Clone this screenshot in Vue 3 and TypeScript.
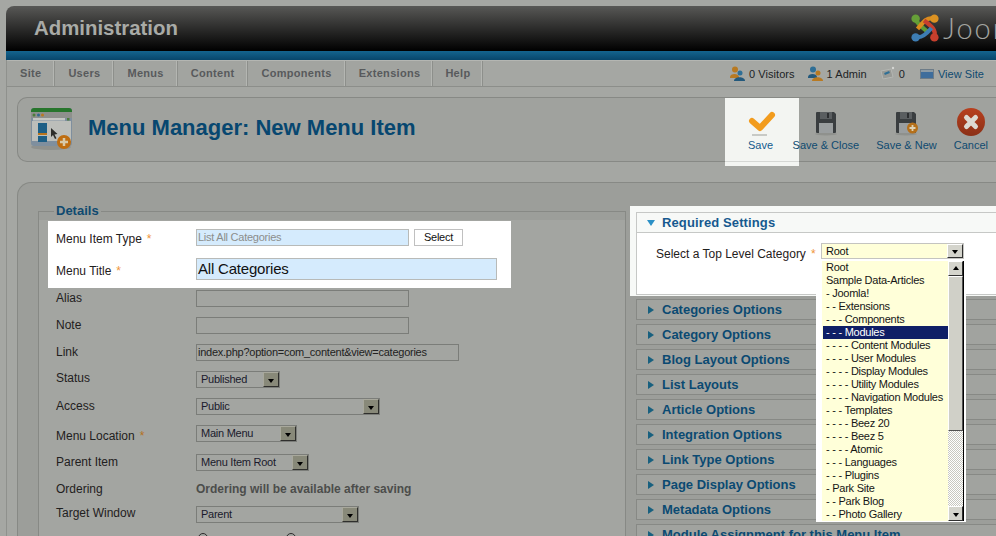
<template>
  <div class="page">
    <header class="topbar">
      <h1 class="topbar__title">Administration</h1>
      <div class="logo">
        <svg width="30" height="30" viewBox="0 0 32 32" fill="none" stroke-width="4.500">
          <path d="M6 7C9 13 13 15 20 21" stroke="#5f9c34" />
          <path d="M25 6C18 4 14 10 8 17" stroke="#d98c1e" />
          <path d="M26 25C28 18 23 14 15 8" stroke="#c63f2d" />
          <path d="M6 25C11 28 17 23 23 16" stroke="#3d7db4" />
          <circle cx="6" cy="6" r="4.500" fill="#669f38" />
          <circle cx="26" cy="6" r="4.500" fill="#dc9222" />
          <circle cx="6" cy="26" r="4.500" fill="#3d7db4" />
          <circle cx="26" cy="26" r="4.500" fill="#c63f2d" />
        </svg>
        <span class="logo__text">Joomla</span>
      </div>
    </header>
    <div class="blueband"></div>

    <div class="body">
      <nav class="submenu">
        <ul class="submenu__tabs">
          <li v-for="item in menu" :key="item">{{ item }}</li>
        </ul>
        <div class="status">
          <span class="status__item">
            <svg width="15" height="15" viewBox="0 0 15 15"><circle cx="5" cy="3.500" r="3" fill="#b87a22" /><path d="M0 11c0-4 9-4 9 0v1H0z" fill="#b87a22" /><circle cx="10" cy="7" r="2.500" fill="#2f6f96" /><path d="M4 15c0-5 11-5 11 0z" fill="#23597c" /></svg>
            0 Visitors
          </span>
          <span class="status__item">
            <svg width="15" height="15" viewBox="0 0 15 15"><circle cx="5" cy="3.500" r="3" fill="#2f6f96" /><path d="M0 11c0-4 9-4 9 0v1H0z" fill="#23597c" /><circle cx="10" cy="7" r="2.500" fill="#b87a22" /><path d="M4 15c0-5 11-5 11 0z" fill="#b87a22" /></svg>
            1 Admin
          </span>
          <span class="status__item">
            <svg width="15" height="15" viewBox="0 0 15 15"><path d="M1 5l10-2 2 8-10 2z" fill="#989a96" stroke="#b4b6b2" /><path d="M4.500 8l5-2" stroke="#2f6f96" stroke-width="2" /><circle cx="13" cy="2" r="1.200" fill="#d4d6d2" /></svg>
            0
          </span>
          <span class="status__item status__item--link">
            <svg width="14" height="12" viewBox="0 0 14 12"><rect x="0.500" y="1.500" width="13" height="9" fill="#3e6d9c" stroke="#6d7c88" /><rect x="1" y="2" width="12" height="2" fill="#8b9aa5" /></svg>
            View Site
          </span>
        </div>
      </nav>

      <section class="toolbar">
        <div class="toolbar__title">
          <svg class="toolbar__icon" width="46" height="46" viewBox="0 0 46 46">
            <ellipse cx="22" cy="41" rx="20" ry="3" fill="#8f918d" />
            <rect x="2" y="2" width="41" height="38" rx="3" fill="#7f8f9e" />
            <path d="M2 6V5a3 3 0 0 1 3-3h35a3 3 0 0 1 3 3v1z" fill="#27752c" />
            <rect x="2" y="6" width="41" height="6" fill="#8e908c" />
            <circle cx="5" cy="9" r="1.500" fill="#4d7d3a" />
            <circle cx="9.500" cy="9" r="1.500" fill="#33688e" />
            <circle cx="13.500" cy="9" r="1.500" fill="#b87a22" />
            <rect x="4" y="12" width="32" height="2.500" fill="#c4c6c2" />
            <rect x="38" y="12" width="2.500" height="2.500" fill="#4d7d3a" />
            <rect x="3" y="15" width="39" height="20" fill="#bcbeba" />
            <rect x="9" y="17" width="9" height="10" fill="#1d5f86" />
            <rect x="9" y="27" width="9" height="2" fill="#b8741c" />
            <rect x="9" y="30" width="9" height="6" fill="#1d5f86" />
            <path d="M22 22l0 9 2-2 2 4 1.500-.8-2-3.800 3-.400z" fill="#2c2d2b" />
            <circle cx="35" cy="36" r="7" fill="#bf6d10" />
            <path d="M35 32v8M31 36h8" stroke="#d8c9a8" stroke-width="2.500" />
          </svg>
          <h2>Menu Manager: New Menu Item</h2>
        </div>
        <div class="toolbar__buttons">
          <a class="tool tool--lit">
            <svg width="30" height="28" viewBox="0 0 30 28"><path d="M6 13l8 7L26 7" fill="none" stroke="#f29c1e" stroke-width="6" stroke-linecap="round" stroke-linejoin="round" /><rect x="6" y="26" width="15" height="2" fill="#c8cac6" /></svg>
            <span>Save</span>
          </a>
          <a class="tool tool--close">
            <svg width="24" height="28" viewBox="0 0 24 28"><ellipse cx="12" cy="26" rx="11" ry="1.500" fill="#8f918d" /><path d="M3 4h17l2 2v18a1 1 0 0 1-1 1H3a1 1 0 0 1-1-1V5a1 1 0 0 1 1-1z" fill="#3a3e40" /><rect x="5" y="15" width="14" height="10" fill="#9a9e9f" /><rect x="6" y="4" width="12" height="7" fill="#5a5e60" /><rect x="13" y="5" width="2" height="5" fill="#2c2e30" /></svg>
            <span>Save &amp; Close</span>
          </a>
          <a class="tool">
            <svg width="24" height="28" viewBox="0 0 24 28"><ellipse cx="12" cy="26" rx="11" ry="1.500" fill="#8f918d" /><path d="M3 4h17l2 2v18a1 1 0 0 1-1 1H3a1 1 0 0 1-1-1V5a1 1 0 0 1 1-1z" fill="#3a3e40" /><rect x="5" y="15" width="14" height="10" fill="#9a9e9f" /><rect x="6" y="4" width="12" height="7" fill="#5a5e60" /><rect x="13" y="5" width="2" height="5" fill="#2c2e30" /><circle cx="18.500" cy="20" r="5.500" fill="#b5701a" /><path d="M18.500 17v6M15.500 20h6" stroke="#ded2b6" stroke-width="1.800" /></svg>
            <span>Save &amp; New</span>
          </a>
          <a class="tool">
            <svg width="28" height="28" viewBox="0 0 28 28"><defs><linearGradient id="cancelFill" x1="0" y1="0" x2="0" y2="1"><stop offset="0" stop-color="#b8401f" /><stop offset="1" stop-color="#8b3016" /></linearGradient></defs><circle cx="14" cy="14" r="14" fill="url(#cancelFill)" /><path d="M9.500 9.500l9 9M18.500 9.500l-9 9" stroke="#dcd9d2" stroke-width="5" stroke-linecap="round" /></svg>
            <span>Cancel</span>
          </a>
        </div>
      </section>

      <main class="content">
        <fieldset class="details">
          <legend>Details</legend>
          <div class="lit-rows">
            <div class="row row--type">
              <label>Menu Item Type<i>*</i></label>
              <span class="input input--lit input--ro">List All Categories</span>
              <span class="select-btn">Select</span>
            </div>
            <div class="row row--title">
              <label>Menu Title<i>*</i></label>
              <span class="input input--lit input--big">All Categories</span>
            </div>
          </div>

          <div
            v-for="r in rows"
            :key="r.label"
            class="row"
            :style="{ height: r.height + 'px' }"
          >
            <label :style="{ marginTop: r.labelTop + 'px' }">{{ r.label }}<i v-if="r.required">*</i></label>
            <span v-if="r.kind === 'input'" class="input" :class="{ 'input--link': r.value }" :style="{ width: r.width + 'px' }">{{ r.value }}</span>
            <span v-else-if="r.kind === 'select'" class="combo" :style="{ width: r.width + 'px' }">
              <span class="combo__value">{{ r.value }}</span>
              <span class="combo__btn"><b></b></span>
            </span>
            <span v-else class="note-text">{{ r.value }}</span>
          </div>

          <div class="row">
            <label></label>
            <span class="radio"></span>
            <span class="radio"></span>
          </div>
        </fieldset>

        <div class="panels">
          <div class="panel-lit">
            <h3 class="panel panel--open"><span class="arrow-down"></span>Required Settings</h3>
            <div class="panel-body">
              <label>Select a Top Level Category<i>*</i></label>
              <span class="combo combo--lit">
                <span class="combo__value">Root</span>
                <span class="combo__btn"><b></b></span>
              </span>
            </div>
          </div>
          <h3 v-for="p in panels" :key="p" class="panel"><span class="arrow-right"></span>{{ p }}</h3>

          <div class="dropdown">
            <ul class="dropdown__list">
              <li v-for="o in options" :key="o" :class="{ sel: o === '- - - Modules' }">{{ o }}</li>
            </ul>
            <div class="scroll">
              <span class="scroll__btn"><b class="up"></b></span>
              <span class="scroll__thumb"></span>
              <span class="scroll__track"></span>
              <span class="scroll__btn"><b></b></span>
            </div>
          </div>
        </div>
      </main>
    </div>
  </div>
</template>

<script setup lang="ts">
interface FormRow {
  label: string
  kind: 'input' | 'select' | 'text'
  value?: string
  width?: number
  height: number
  labelTop: number
  required?: boolean
}

const menu = ['Site', 'Users', 'Menus', 'Content', 'Components', 'Extensions', 'Help']

const rows: FormRow[] = [
  { label: 'Alias', kind: 'input', width: 213, height: 27, labelTop: 1 },
  { label: 'Note', kind: 'input', width: 213, height: 27, labelTop: 1 },
  { label: 'Link', kind: 'input', value: 'index.php?option=com_content&view=categories', width: 263, height: 27, labelTop: 1 },
  { label: 'Status', kind: 'select', value: 'Published', width: 84, height: 27, labelTop: 0 },
  { label: 'Access', kind: 'select', value: 'Public', width: 184, height: 27, labelTop: 1 },
  { label: 'Menu Location', kind: 'select', value: 'Main Menu', width: 101, height: 29, labelTop: 4, required: true },
  { label: 'Parent Item', kind: 'select', value: 'Menu Item Root', width: 113, height: 27, labelTop: 1 },
  { label: 'Ordering', kind: 'text', value: 'Ordering will be available after saving', height: 25, labelTop: 1 },
  { label: 'Target Window', kind: 'select', value: 'Parent', width: 163, height: 27, labelTop: 0 },
]

const panels = [
  'Categories Options',
  'Category Options',
  'Blog Layout Options',
  'List Layouts',
  'Article Options',
  'Integration Options',
  'Link Type Options',
  'Page Display Options',
  'Metadata Options',
  'Module Assignment for this Menu Item',
]

const options = [
  'Root',
  'Sample Data-Articles',
  '- Joomla!',
  '- - Extensions',
  '- - - Components',
  '- - - Modules',
  '- - - - Content Modules',
  '- - - - User Modules',
  '- - - - Display Modules',
  '- - - - Utility Modules',
  '- - - - Navigation Modules',
  '- - - Templates',
  '- - - - Beez 20',
  '- - - - Beez 5',
  '- - - - Atomic',
  '- - - Languages',
  '- - - Plugins',
  '- Park Site',
  '- - Park Blog',
  '- - Photo Gallery',
]
</script>

<style>
html,
body {
  margin: 0;
  height: 100%;
  overflow: hidden;
  background: #a5a7a3;
}
</style>

<style scoped>
.page {
  width: 996px;
  height: 536px;
  box-sizing: border-box;
  padding: 6px 0 0 6px;
  overflow: hidden;
  font-family: "Liberation Sans", Arial, sans-serif;
  font-size: 12px;
  color: #1f2020;
}

.topbar {
  height: 45px;
  display: flex;
  justify-content: space-between;
  border-radius: 8px 0 0 0;
  background: linear-gradient(#585856, #000);
}

.topbar__title {
  margin: 11px 0 0 28px;
  font-size: 20.4px;
  line-height: 22px;
  color: #a9aba7;
}

.logo {
  display: flex;
  align-items: flex-start;
  gap: 3px;
  margin: 7px 0 0 0;
  width: 86px;
  overflow: hidden;
  flex: none;
}

.logo svg {
  flex: none;
}

.logo__text {
  font-family: Lato, "Open Sans", sans-serif;
  font-size: 29px;
  font-weight: 300;
  line-height: 30px;
  letter-spacing: 2px;
  color: #a3a5a1;
}

.blueband {
  height: 9px;
  background: linear-gradient(#14648e, #08466b);
}

.body {
  border-left: 1px solid #8f918d;
  height: 476px;
}

.submenu {
  display: flex;
  justify-content: space-between;
  align-items: center;
  height: 27px;
  box-sizing: border-box;
  border-top: 1px solid #b4b6b2;
  border-bottom: 1px solid #8c8e8a;
}

.submenu__tabs {
  display: flex;
  list-style: none;
  margin: 0;
  padding: 0;
  height: 100%;
}

.submenu__tabs li {
  padding: 0 13px;
  line-height: 25px;
  font-size: 11px;
  font-weight: 700;
  letter-spacing: 0.3px;
  color: #585a5c;
  background: #a2a4a0;
  border-right: 1px solid #8d8f8b;
  box-shadow: inset -1px 0 0 #b4b6b2;
}

.submenu__tabs li:nth-child(6) {
  padding-right: 12px;
}

.submenu__tabs li:nth-child(7) {
  padding: 0 12px;
}

.status {
  display: flex;
  gap: 13px;
  font-size: 11px;
  padding-right: 12px;
}

.status__item {
  display: flex;
  align-items: center;
  gap: 4px;
  letter-spacing: 0.05px;
  color: #202325;
}

.status__item--link {
  color: #0f4a70;
  margin-left: 2px;
}

.toolbar {
  display: flex;
  justify-content: space-between;
  height: 65px;
  box-sizing: border-box;
  margin: 10px 0 0 10px;
  border: 1px solid #878985;
  border-right: 0;
  border-radius: 10px 0 0 10px;
  background: #a0a29e;
}

.toolbar__title {
  display: flex;
  align-items: flex-start;
  padding-left: 11px;
}

.toolbar__title h2 {
  margin: 16px 0 0 13px;
  font-size: 22px;
  line-height: 27px;
  color: #074770;
}

.toolbar__icon {
  flex: none;
  margin-top: 8px;
}

.toolbar__buttons {
  display: flex;
  height: 68px;
  padding-right: 8px;
}

.tool {
  display: flex;
  flex-direction: column;
  align-items: center;
  margin-left: 17px;
  padding-top: 10px;
  font-size: 11px;
  color: #0f4a70;
  white-space: nowrap;
}

.tool span {
  margin-top: 3px;
  line-height: 13px;
}

.tool svg {
  display: block;
}

.tool--lit {
  width: 72px;
  margin-left: 0;
  padding-right: 2px;
  color: #135b8e;
  background: linear-gradient(#f3f5f2 63px, #d5d7d4 63px, #d5d7d4 64px, #f3f5f2 64px);
}

.tool--close {
  margin-left: -6px;
}

.content {
  display: flex;
  margin: 20px 0 0 10px;
  height: 400px;
  box-sizing: border-box;
  padding-left: 20px;
  border: 1px solid #878985;
  border-right: 0;
  border-bottom: 0;
  border-radius: 14px 0 0 0;
  background: #9c9e9a;
}

.details {
  flex: none;
  width: 588px;
  height: 400px;
  box-sizing: border-box;
  margin: 20px 0 0 0;
  padding: 0;
  border: 1px solid #878985;
  border-bottom: 0;
  min-inline-size: 0;
  background: linear-gradient(#a3a5a1, #a3a5a1) 0 8px no-repeat;
}

.details legend {
  padding: 0 2px;
  margin-left: 15px;
  font-size: 13px;
  line-height: 16px;
  font-weight: 700;
  color: #0f4a70;
}

.lit-rows {
  width: 463px;
  box-sizing: border-box;
  margin: 2px 0 2px 9px;
  padding: 8px 0 8px 8px;
  background: #fff;
}

.row {
  display: flex;
  align-items: flex-start;
  box-sizing: border-box;
}

.details > .row {
  padding-left: 17px;
}

.row label {
  flex: none;
  width: 140px;
  line-height: 14px;
}

.row label i,
.panel-body label i {
  margin-left: 5px;
  font-style: normal;
  color: #b5711e;
}

.lit-rows label i,
.panel-body label i {
  color: #f0953a;
}

.row--type {
  height: 29px;
}

.row--type label {
  margin-top: 3px;
}

.row--title {
  height: 22px;
}

.row--title label {
  margin-top: 6px;
}

.input {
  display: block;
  height: 17px;
  box-sizing: border-box;
  padding-left: 1px;
  border: 1px solid #7b7d79;
  font-size: 11px;
  line-height: 15px;
  letter-spacing: -0.25px;
  white-space: nowrap;
}

.input--lit {
  border-color: #b8bab8;
  background: #d5ebfd;
}

.input--ro {
  width: 213px;
  color: #8c8e8c;
}

.input--big {
  width: 301px;
  height: 22px;
  font-size: 15px;
  line-height: 19px;
  letter-spacing: -0.2px;
  color: #111;
}

.input--link {
  color: #222;
}

.select-btn {
  width: 49px;
  height: 17px;
  box-sizing: border-box;
  margin-left: 5px;
  border: 1px solid #c0c0c0;
  font-size: 11px;
  line-height: 15px;
  letter-spacing: -0.25px;
  text-align: center;
  color: #111;
}

.combo {
  display: flex;
  height: 17px;
  box-sizing: border-box;
  border: 1px solid #7b7d79;
  font-size: 11px;
  line-height: 15px;
  letter-spacing: -0.25px;
  color: #1a1a2c;
}

.combo__value {
  flex: 1;
  padding-left: 4px;
  white-space: nowrap;
  overflow: hidden;
}

.combo__btn {
  display: flex;
  align-items: center;
  justify-content: center;
  flex: none;
  width: 16px;
  box-sizing: border-box;
  border: 1px solid;
  border-color: #a8a89c #2f2f2d #2f2f2d #a8a89c;
  background: #888979;
}

.combo__btn b,
.scroll__btn b {
  display: block;
  width: 0;
  height: 0;
  margin-top: 2px;
  border: 3px solid transparent;
  border-bottom: 0;
  border-top: 4px solid #000;
}

.combo--lit {
  width: 143px;
  height: 16px;
  border-color: #c4c4c0;
  background: #ffffd9;
  color: #111;
}

.combo--lit .combo__btn {
  border-color: #fff #303030 #303030 #fff;
  background: #d4d4cc;
}

.note-text {
  margin-top: 1px;
  font-weight: 700;
  line-height: 14px;
  color: #4c4d4b;
}

.radio {
  flex: none;
  width: 10px;
  height: 10px;
  box-sizing: border-box;
  margin-left: 2px;
  border: 1px solid #2b2b2b;
  border-radius: 50%;
}

.radio + .radio {
  margin-left: 78px;
}

.panels {
  position: relative;
  flex: none;
  width: 360px;
  margin: 23px 0 0 10px;
}

.panel-lit {
  width: 366px;
  box-sizing: border-box;
  margin: 0 0 3px -6px;
  padding: 6px 0 1px 6px;
  background: #f7f9f7;
}

.panel {
  display: flex;
  align-items: center;
  height: 21px;
  box-sizing: border-box;
  margin: 0 0 4px;
  border: 1px solid #878985;
  border-right: 0;
  background: #a1a39f;
  font-size: 13px;
  font-weight: 700;
  white-space: nowrap;
  color: #0b4a72;
}

.panel--open {
  margin: 0;
  border-color: #c6c8c6;
  background: #f7f9f7;
  letter-spacing: 0.12px;
  color: #16598f;
}

.arrow-right {
  flex: none;
  width: 0;
  height: 0;
  margin: 0 8px 0 11px;
  border: 4px solid transparent;
  border-right: 0;
  border-left: 6px solid #18607f;
}

.arrow-down {
  flex: none;
  width: 0;
  height: 0;
  margin: 0 7px 0 10px;
  border: 4.5px solid transparent;
  border-bottom: 0;
  border-top: 6px solid #2b90c6;
}

.panel-body {
  display: flex;
  align-items: flex-start;
  height: 62px;
  box-sizing: border-box;
  padding: 10px 0 0 19px;
  border: 1px solid #c6c8c6;
  border-top: 0;
  border-right: 0;
  background: #fff;
}

.panel-body label {
  flex: none;
  width: 165px;
  margin-top: 4px;
  line-height: 14px;
  white-space: nowrap;
}

.dropdown {
  position: absolute;
  top: 54px;
  left: 180px;
  display: flex;
  width: 150px;
  height: 262px;
  box-sizing: border-box;
  padding: 1px 2px 1px 6px;
  background: #fff;
}

.dropdown__list {
  flex: 1;
  min-width: 0;
  list-style: none;
  margin: 0;
  padding: 0;
  background: #ffffd9;
  font-size: 11px;
  line-height: 13px;
  letter-spacing: -0.25px;
  color: #151515;
  white-space: nowrap;
}

.dropdown__list li {
  padding-left: 4px;
}

.dropdown__list li.sel {
  margin-left: 1px;
  padding-left: 3px;
  background: #0f1f66;
  color: #fff;
}

.scroll {
  display: flex;
  flex-direction: column;
  flex: none;
  width: 16px;
  box-sizing: border-box;
  border-right: 1px solid #000;
}

.scroll__btn {
  display: flex;
  align-items: center;
  justify-content: center;
  flex: none;
  height: 15px;
  box-sizing: border-box;
  border: 1px solid;
  border-color: #fff #303030 #303030 #fff;
  background: #d4d4cc;
}

.scroll__btn b.up {
  margin: 0 0 2px;
  border: 3px solid transparent;
  border-top: 0;
  border-bottom: 4px solid #000;
}

.scroll__thumb {
  flex: none;
  height: 155px;
  box-sizing: border-box;
  border: 1px solid;
  border-color: #fff #505050 #505050 #fff;
  background: #d0d0c8;
}

.scroll__track {
  flex: 1;
  background: repeating-conic-gradient(#c8c8c0 0 25%, #fff 0 50%) 0 0 / 2px 2px;
}
</style>
